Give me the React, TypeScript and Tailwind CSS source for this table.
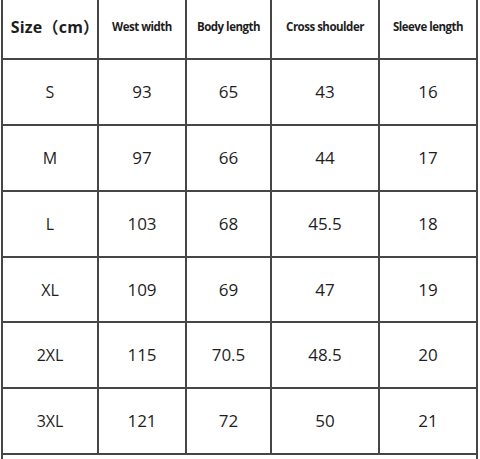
const headers = ['West width', 'Body length', 'Cross shoulder', 'Sleeve length'];

const rows: { size: string; values: string[]; h: string }[] = [
  { size: 'S', values: ['93', '65', '43', '16'], h: 'h-[64px]' },
  { size: 'M', values: ['97', '66', '44', '17'], h: 'h-[64px]' },
  { size: 'L', values: ['103', '68', '45.5', '18'], h: 'h-[64px]' },
  { size: 'XL', values: ['109', '69', '47', '19'], h: 'h-[63px]' },
  { size: '2XL', values: ['115', '70.5', '48.5', '20'], h: 'h-[64px]' },
  { size: '3XL', values: ['121', '72', '50', '21'], h: 'h-[64px]' },
];

export default function App() {
  return (
    <div className="w-[480px] h-[459px] overflow-hidden bg-white font-['Open_Sans','Noto_Sans_CJK_SC',sans-serif] text-[#1e1e1e]">
      <div className="ml-[1px] w-[477px] px-[2px] bg-[#464646] grid grid-cols-[94px_86px_83px_106px_96px] gap-[2px]">
        {/* header */}
        <div className="h-[58px] bg-white flex items-center justify-center pb-[4px] pl-[10px] text-[16px] font-bold tracking-[0.2px] whitespace-nowrap">
          Size（cm）
        </div>
        {headers.map((h) => (
          <div
            key={h}
            className="h-[58px] bg-white flex items-center justify-center pb-[4px] text-[11.5px] font-bold tracking-[-0.5px] whitespace-nowrap"
          >
            {h}
          </div>
        ))}

        {rows.map((r) => (
          <div key={r.size} className="contents">
            <div className={`${r.h} bg-white flex items-center justify-center text-[16px] font-medium`}>
              {r.size}
            </div>
            {r.values.map((v, i) => (
              <div key={i} className={`${r.h} bg-white flex items-center justify-center text-[17px] font-medium`}>
                {v}
              </div>
            ))}
          </div>
        ))}

        {/* empty trailing row */}
        <div className="col-span-5 h-[40px] bg-white" />
      </div>
    </div>
  );
}
